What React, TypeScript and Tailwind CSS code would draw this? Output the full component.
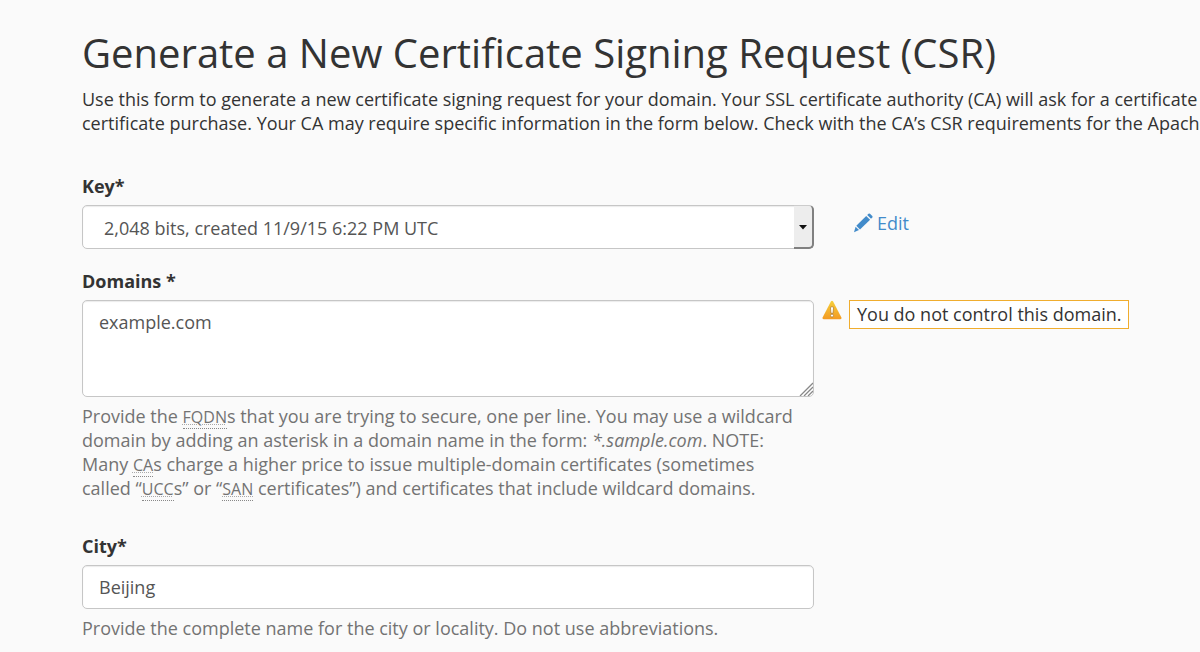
import { useState } from 'react';
import type { ReactNode } from 'react';

const KEYS = ['2,048 bits, created 11/9/15 6:22 PM UTC'];

const CONTROL = 'block w-full rounded-[5px] border border-[#c6c6c6] bg-white px-4 text-[18px] leading-6 text-[#555] shadow-[inset_0_1px_1px_rgba(0,0,0,0.08)] outline-none';

function PencilIcon() {
  return (
    <svg className="h-5 w-5 shrink-0" viewBox="0 0 20 20" fill="#428bca" aria-hidden="true">
      <path d="M14.2 2 15.5.7q.8-.6 1.5 0l2.3 2.3q.6.8 0 1.5l-1.3 1.3z" />
      <path d="M13.2 2.900 17.100 6.800 7 16.400 3.300 12.700z" />
      <path d="M2.600 13.700 6 17.100 1 19.200z" />
    </svg>
  );
}

function WarningIcon() {
  return (
    <svg className="h-5 w-5 shrink-0" viewBox="0 0 20 20" aria-hidden="true">
      <defs>
        <linearGradient id="warn" x1="0" y1="0" x2="0" y2="1">
          <stop offset="0" stopColor="#f5cf3c" />
          <stop offset="1" stopColor="#f39a22" />
        </linearGradient>
      </defs>
      <path d="M9 1.3q1-1.3 2 0l8.4 16.2q.5 1.5-1 1.7H1.6q-1.5-.2-1-1.7z" fill="url(#warn)" />
      <path d="M8.4 7.3q1.600-1.200 3.200 0l-.6 6H9z" fill="#fff" stroke="#a9752c" strokeWidth=".7" />
      <circle cx="10" cy="15.6" r="1.5" fill="#fff" stroke="#a9752c" strokeWidth=".7" />
    </svg>
  );
}

function Abbr({ title, children }: { title: string; children: ReactNode }) {
  return (
    <abbr title={title} className="border-b border-dotted border-[#888] text-[16px] leading-4 underline decoration-[#aaa] decoration-dotted decoration-1">
      {children}
    </abbr>
  );
}

function Field({ id, label, help, aside, children }: {
  id: string;
  label: string;
  help?: ReactNode;
  aside?: ReactNode;
  children: ReactNode;
}) {
  return (
    <div>
      <label htmlFor={id} className="mb-[7px] block font-bold">{label}</label>
      <div className="grid grid-cols-[732fr_378fr] gap-2">
        <div>
          {children}
          {help && <p className="mt-[7px] pr-3 text-[#737373]">{help}</p>}
        </div>
        <div>{aside}</div>
      </div>
    </div>
  );
}

export default function App() {
  const [domains, setDomains] = useState('example.com');
  const [city, setCity] = useState('Beijing');

  return (
    <main className="min-h-screen overflow-hidden bg-[#fafafa] pt-7 pb-3 pl-[82px] font-['Open_Sans','Noto_Sans',sans-serif] text-[18px] leading-6 text-[#333]">
      <h1 className="mb-[9px] text-[40px] leading-[50px] whitespace-nowrap">
        Generate a New Certificate Signing Request (CSR)
      </h1>
      <p className="whitespace-nowrap">
        Use this form to generate a new certificate signing request for your domain. Your SSL certificate authority (CA) will ask for a certificate
        <br />
        certificate purchase. Your CA may require specific information in the form below. Check with the CA’s CSR requirements for the Apache
      </p>

      <form className="mt-[39px]" onSubmit={e => e.preventDefault()}>
        <Field
          id="key"
          label="Key*"
          aside={
            <a href="#edit" className="mt-1.5 ml-[31px] inline-flex items-center gap-1 text-[#428bca] hover:underline">
              <PencilIcon />
              Edit
            </a>
          }
        >
          <div className="relative">
            <select id="key" className={`${CONTROL} h-11 appearance-none pt-0.5 pl-[21px]`}>
              {KEYS.map(k => <option key={k}>{k}</option>)}
            </select>
            <span className="pointer-events-none absolute inset-y-0 right-0 flex w-5 items-center justify-center rounded-r-[5px] border-t border-r-2 border-b-2 border-t-[#ccc] border-r-[#808080] border-b-[#808080] bg-[#ededed]">
              <svg className="h-1.5 w-2" viewBox="0 0 8 6" aria-hidden="true"><path d="M0 1h8L4 5.5z" fill="#111" /></svg>
            </span>
          </div>
        </Field>

        <div className="mt-5">
          <Field
            id="domains"
            label="Domains *"
            help={
              <>
                Provide the <Abbr title="Fully Qualified Domain Name">FQDN</Abbr>s that you are trying to secure, one per line. You may use a wildcard domain by adding an asterisk in a domain name in the form: <em>*.sample.com</em>. NOTE: Many <Abbr title="Certificate Authority">CA</Abbr>s charge a higher price to issue multiple-domain certificates (sometimes called “<Abbr title="Unified Communications Certificate">UCC</Abbr>s” or “<Abbr title="Subject Alternative Name">SAN</Abbr> certificates”) and certificates that include wildcard domains.
              </>
            }
            aside={
              <div className="flex items-start gap-[7px]" role="alert">
                <WarningIcon />
                <span className="border border-[#f0ad2e] bg-white px-[7px] pt-px pb-0.5">You do not control this domain.</span>
              </div>
            }
          >
            <div className="relative">
              <textarea
                id="domains"
                value={domains}
                onChange={e => setDomains(e.target.value)}
                className={`${CONTROL} h-[97px] resize-none py-[9px]`}
              />
              <svg className="pointer-events-none absolute right-px bottom-px h-3.5 w-3.5" viewBox="0 0 14 14" stroke="#888" strokeWidth="1.3" aria-hidden="true">
                <path d="M1 14 14 1M5 14 14 5M9 14 14 9" />
              </svg>
            </div>
          </Field>
        </div>

        <div className="mt-[34px]">
          <Field
            id="city"
            label="City*"
            help="Provide the complete name for the city or locality. Do not use abbreviations."
          >
            <input
              id="city"
              type="text"
              value={city}
              onChange={e => setCity(e.target.value)}
              className={`${CONTROL} h-11`}
            />
          </Field>
        </div>
      </form>
    </main>
  );
}
